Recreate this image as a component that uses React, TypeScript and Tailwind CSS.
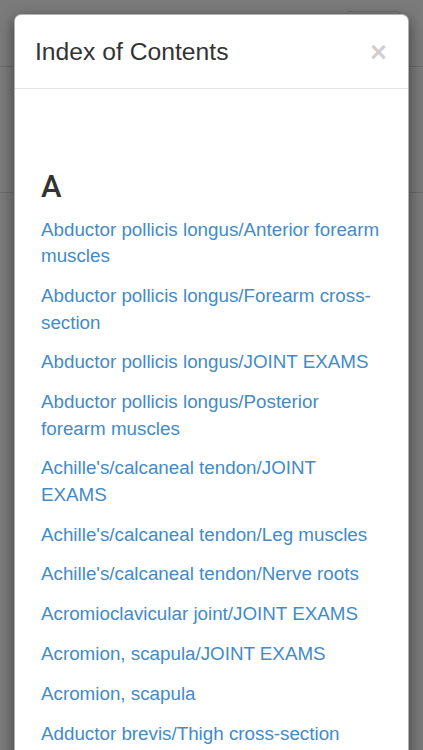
import React from 'react';

const entries = [
  'Abductor pollicis longus/Anterior forearm muscles',
  'Abductor pollicis longus/Forearm cross-section',
  'Abductor pollicis longus/JOINT EXAMS',
  'Abductor pollicis longus/Posterior forearm muscles',
  "Achille's/calcaneal tendon/JOINT EXAMS",
  "Achille's/calcaneal tendon/Leg muscles",
  "Achille's/calcaneal tendon/Nerve roots",
  'Acromioclavicular joint/JOINT EXAMS',
  'Acromion, scapula/JOINT EXAMS',
  'Acromion, scapula',
  'Adductor brevis/Thigh cross-section',
];

const App: React.FC = () => {
  return (
    <div
      className="relative h-[750px] w-full overflow-hidden bg-[#7b7b7b]"
      style={{ fontFamily: '"Liberation Sans", Arial, Helvetica, sans-serif' }}
    >
      {/* dimmed page behind the modal */}
      <div className="flex h-[67px] justify-end border-b border-[#6b6b6b] pr-[22px] pt-[11px]">
        <div className="h-[46px] w-[56px] rounded-[5px] border border-[#6e6e6e]" />
      </div>
      <div className="h-[126px] border-b border-[#6b6b6b]" />

      {/* Modal */}
      <div className="absolute left-[14px] top-[14px] w-[395px] rounded-[7px] border border-black/30 bg-white shadow-[0_5px_15px_rgba(0,0,0,0.5)]">
        <div className="flex items-start justify-between border-b border-[#e5e5e5] pl-5 pr-[21px] pb-[19px] pt-5">
          <h4 className="text-[24.7px] leading-[34px] text-[#333]">Index of Contents</h4>
          <button className="mt-[2px] text-[29px] font-bold leading-[30px] text-black/20">×</button>
        </div>

        <div className="pl-[26px] pr-[24px] pt-[81px] pb-5">
          <h3
            className="mb-[13px] text-[31px] font-medium leading-[34px] text-[#333]"
            style={{ fontFamily: 'Roboto, "Liberation Sans", Arial, sans-serif' }}
          >
            A
          </h3>
          <ul className="flex flex-col gap-[13.4px]">
            {entries.map((e) => (
              <li key={e}>
                <a className="text-[18.8px] leading-[26.4px] text-[#428bca]">{e}</a>
              </li>
            ))}
          </ul>
        </div>
      </div>
    </div>
  );
};

export default App;
